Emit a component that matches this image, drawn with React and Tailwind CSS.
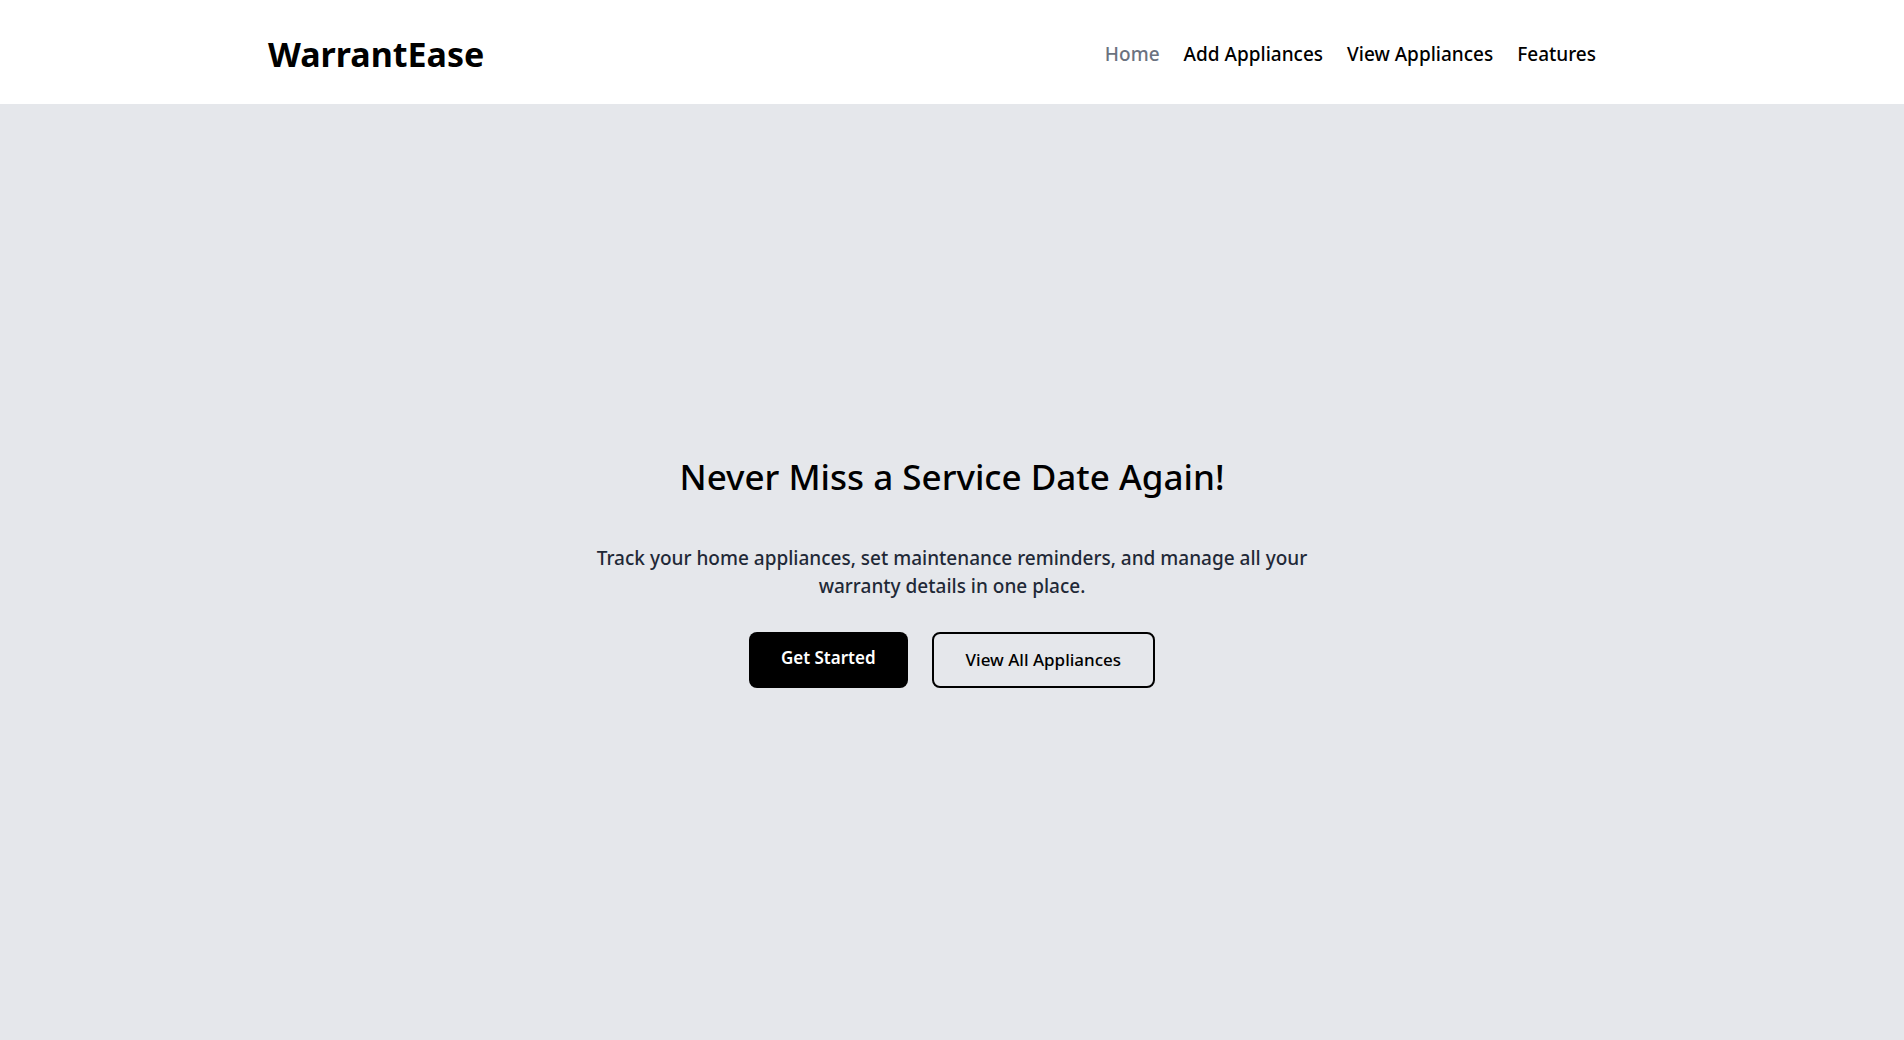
const links = [
  { label: "Home", active: true },
  { label: "Add Appliances" },
  { label: "View Appliances" },
  { label: "Features" },
];

function Header() {
  return (
    <header className="bg-white">
      <div className="mx-auto flex max-w-[1536px] items-center justify-between pt-[34px] pr-[124px] pb-[30px] pl-[84px]">
        <a href="#" className="text-[34px] leading-10 font-bold">WarrantEase</a>
        <nav className="flex gap-6">
          {links.map(({ label, active }) => (
            <a
              key={label}
              href="#"
              className={
                active
                  ? "text-[19px] leading-7 font-medium text-[#6b7280]"
                  : "text-[19px] leading-7 font-medium"
              }
            >
              {label}
            </a>
          ))}
        </nav>
      </div>
    </header>
  );
}

function Hero() {
  return (
    <main className="flex grow flex-col items-center justify-center bg-[#e5e7eb] text-center">
      <h1 className="text-[35px] leading-[42px] font-medium">Never Miss a Service Date Again!</h1>
      <p className="mt-[46px] max-w-[720px] text-[19px] leading-7 font-medium text-[#1f2937]">
        Track your home appliances, set maintenance reminders, and manage all your warranty details in one place.
      </p>
      <div className="mt-8 flex gap-6">
        <button className="rounded-lg bg-black px-8 pt-3 pb-4 text-[17px] leading-7 font-semibold text-white">
          Get Started
        </button>
        <button className="rounded-lg border-2 border-black px-8 py-3 text-[17px] leading-7 font-medium">
          View All Appliances
        </button>
      </div>
    </main>
  );
}

export default function App() {
  return (
    <div className="flex min-h-screen flex-col font-['Noto_Sans',sans-serif] text-black">
      <Header />
      <Hero />
    </div>
  );
}
